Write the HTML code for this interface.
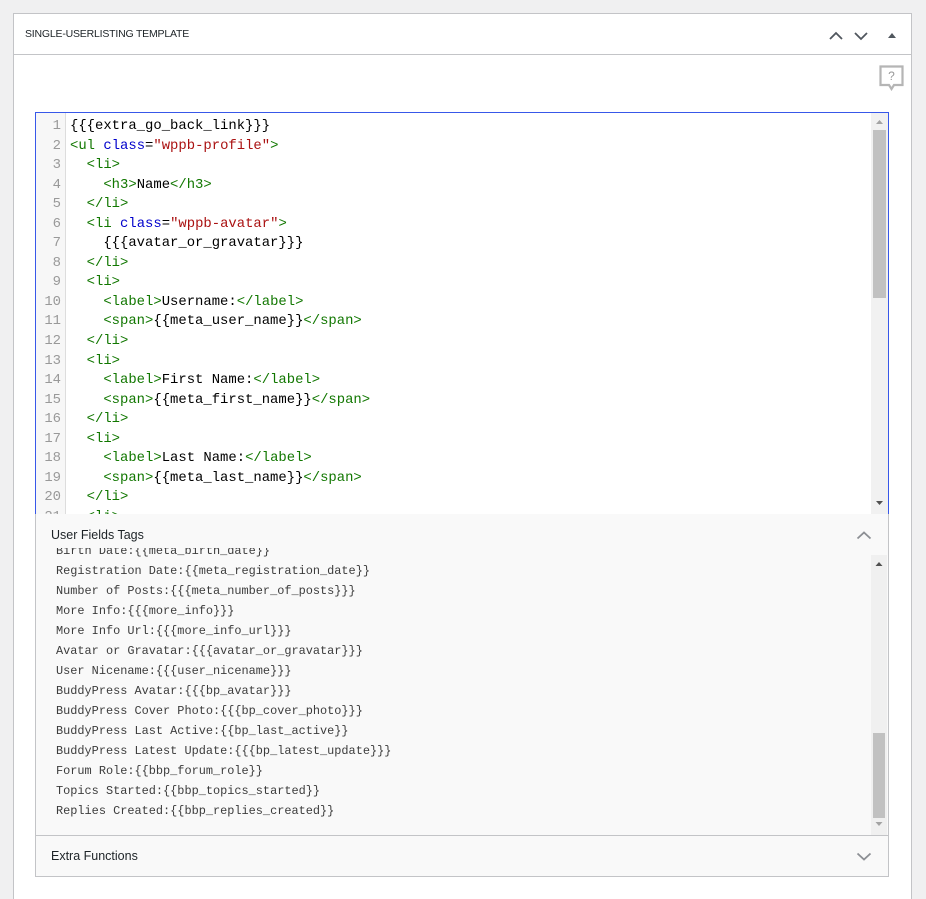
<!DOCTYPE html>
<html style="overflow:hidden"><head><meta charset="utf-8"><style>
*{margin:0;padding:0;box-sizing:border-box}
html,body{width:926px;height:899px;overflow:hidden}
body{background:#f0f0f1;position:relative;font-family:"Liberation Sans",sans-serif}
.panel{position:absolute;left:13px;top:13px;width:899px;height:886px;background:#fff;border:1px solid #c3c4c7;border-bottom:none}
.hdr{position:absolute;left:0;top:0;right:0;height:41px;border-bottom:1px solid #c3c4c7}
.hdr .t{position:absolute;left:11px;top:14px;font-size:10.5px;color:#1d2327;letter-spacing:-0.2px}
.ed{position:absolute;left:35px;top:112px;width:854px;height:403px;border:1px solid #3858e9;background:#fff;overflow:hidden}
.gut{position:absolute;left:0;top:0;width:30px;height:100%;background:#f7f7f7;border-right:1px solid #ddd}
.code{position:absolute;left:0;top:4px;font-family:"Liberation Mono",monospace;font-size:13.9px;line-height:19.55px;white-space:pre}
.ln{display:inline-block;width:25px;text-align:right;color:#999;margin-right:9px}
.tg{color:#170}.at{color:#00c}.st{color:#a11}
.sb{position:absolute;right:0;top:0;width:17px;height:100%;background:#f1f1f1}
.uf{position:absolute;left:35px;top:514px;width:854px;height:322px;background:#f9f9f9;border:1px solid #c3c4c7;border-top:none}
.h{position:absolute;left:15px;font-size:12.5px;color:#1d2327}
.clip{position:absolute;left:0;top:34px;width:835px;height:287px;overflow:hidden}
.list{position:absolute;left:20px;top:-7px;font-family:"Liberation Mono",monospace;font-size:11.9px;line-height:20px;color:#3c3c3c;white-space:pre}
.ef{position:absolute;left:35px;top:835px;width:854px;height:42px;background:#f9f9f9;border:1px solid #c3c4c7}
</style></head><body>
<div class="panel">
 <div class="hdr"><div class="t">SINGLE-USERLISTING TEMPLATE</div>
  <svg style="position:absolute;left:815px;top:15px" width="80" height="14">
   <path d="M1 10 L7 4 L13 10" stroke="#50575e" stroke-width="1.8" fill="none"/>
   <path d="M26 4 L32 10 L38 4" stroke="#50575e" stroke-width="1.8" fill="none"/>
   <path d="M59 9 L63 4 L67 9Z" fill="#50575e"/>
  </svg>
 </div>
 <svg style="position:absolute;left:865px;top:51px" width="26" height="26">
  <path d="M1.5 1.5 H23.5 V20 H15 L12.5 24 L10 20 H1.5Z" fill="#fff" stroke="#b5b5b5" stroke-width="2.2"/>
  <text x="12.5" y="15" font-size="12" fill="#999" text-anchor="middle" font-family="Liberation Sans">?</text>
 </svg>
</div>
<div class="ed"><div class="gut"></div>
<div class="code"><span class="ln">1</span>{{{extra_go_back_link}}}
<span class="ln">2</span><span class="tg">&lt;ul</span> <span class="at">class</span>=<span class="st">"wppb-profile"</span><span class="tg">&gt;</span>
<span class="ln">3</span>  <span class="tg">&lt;li&gt;</span>
<span class="ln">4</span>    <span class="tg">&lt;h3&gt;</span>Name<span class="tg">&lt;/h3&gt;</span>
<span class="ln">5</span>  <span class="tg">&lt;/li&gt;</span>
<span class="ln">6</span>  <span class="tg">&lt;li</span> <span class="at">class</span>=<span class="st">"wppb-avatar"</span><span class="tg">&gt;</span>
<span class="ln">7</span>    {{{avatar_or_gravatar}}}
<span class="ln">8</span>  <span class="tg">&lt;/li&gt;</span>
<span class="ln">9</span>  <span class="tg">&lt;li&gt;</span>
<span class="ln">10</span>    <span class="tg">&lt;label&gt;</span>Username:<span class="tg">&lt;/label&gt;</span>
<span class="ln">11</span>    <span class="tg">&lt;span&gt;</span>{{meta_user_name}}<span class="tg">&lt;/span&gt;</span>
<span class="ln">12</span>  <span class="tg">&lt;/li&gt;</span>
<span class="ln">13</span>  <span class="tg">&lt;li&gt;</span>
<span class="ln">14</span>    <span class="tg">&lt;label&gt;</span>First Name:<span class="tg">&lt;/label&gt;</span>
<span class="ln">15</span>    <span class="tg">&lt;span&gt;</span>{{meta_first_name}}<span class="tg">&lt;/span&gt;</span>
<span class="ln">16</span>  <span class="tg">&lt;/li&gt;</span>
<span class="ln">17</span>  <span class="tg">&lt;li&gt;</span>
<span class="ln">18</span>    <span class="tg">&lt;label&gt;</span>Last Name:<span class="tg">&lt;/label&gt;</span>
<span class="ln">19</span>    <span class="tg">&lt;span&gt;</span>{{meta_last_name}}<span class="tg">&lt;/span&gt;</span>
<span class="ln">20</span>  <span class="tg">&lt;/li&gt;</span>
<span class="ln">21</span>  <span class="tg">&lt;li&gt;</span></div>
<div class="sb"><div style="position:absolute;left:2px;top:17px;width:13px;height:168px;background:#c1c1c1"></div>
<svg style="position:absolute;left:0;top:0" width="17" height="401"><path d="M5 11 L8.5 7 L12 11Z" fill="#a3a3a3"/><path d="M5 388 L8.5 392 L12 388Z" fill="#505050"/></svg></div>
</div>
<div class="uf">
 <div class="h" style="top:14px">User Fields Tags</div>
 <svg style="position:absolute;left:820px;top:16px" width="16" height="10"><path d="M1.5 8.5 L8 2.5 L14.5 8.5" stroke="#8c8f94" stroke-width="1.8" fill="none"/></svg>
 <div class="clip"><div class="list">Birth Date:{{meta_birth_date}}
Registration Date:{{meta_registration_date}}
Number of Posts:{{{meta_number_of_posts}}}
More Info:{{{more_info}}}
More Info Url:{{{more_info_url}}}
Avatar or Gravatar:{{{avatar_or_gravatar}}}
User Nicename:{{{user_nicename}}}
BuddyPress Avatar:{{{bp_avatar}}}
BuddyPress Cover Photo:{{{bp_cover_photo}}}
BuddyPress Last Active:{{bp_last_active}}
BuddyPress Latest Update:{{{bp_latest_update}}}
Forum Role:{{bbp_forum_role}}
Topics Started:{{bbp_topics_started}}
Replies Created:{{bbp_replies_created}}</div></div>
 <div style="position:absolute;left:835px;top:41px;width:16px;height:280px;background:#f0f0f0">
  <div style="position:absolute;left:2px;top:178px;width:12px;height:85px;background:#c1c1c1"></div>
  <svg style="position:absolute;left:0;top:0" width="16" height="280"><path d="M4.5 11 L8 7 L11.5 11Z" fill="#505050"/><path d="M4.5 267 L8 271 L11.5 267Z" fill="#a3a3a3"/></svg>
 </div>
</div>
<div class="ef">
 <div class="h" style="top:13px">Extra Functions</div>
 <svg style="position:absolute;left:820px;top:16px" width="16" height="10"><path d="M1.5 1.5 L8 7.5 L14.5 1.5" stroke="#8c8f94" stroke-width="1.8" fill="none"/></svg>
</div>
</body></html>
